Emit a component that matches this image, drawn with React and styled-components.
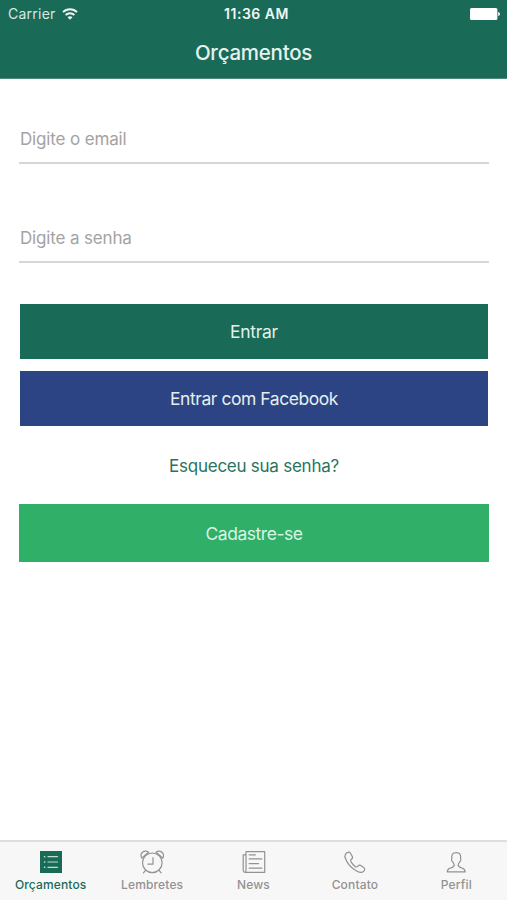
import React from "react";
import styled, { createGlobalStyle } from "styled-components";

const GlobalStyle = createGlobalStyle`
  * {
    box-sizing: border-box;
  }

  body {
    margin: 0;
    background: #fff;
    font-family: Inter, "Liberation Sans", sans-serif;
  }
`;

const Screen = styled.div`
  width: 100%;
  height: 100vh;
  display: flex;
  flex-direction: column;
  overflow: hidden;
`;

const Header = styled.header`
  height: 79px;
  color: #fff;
  background: #196b57;
  border-bottom: 1px solid #4c8b7b;
`;

const StatusBar = styled.div`
  height: 27px;
  padding: 0 7px 0 8px;
  display: grid;
  grid-template-columns: 1fr auto 1fr;
  align-items: center;
`;

const Carrier = styled.div`
  display: flex;
  align-items: center;
  gap: 6px;
  color: #d9e8e4;
  font-size: 14px;
  letter-spacing: 0.25px;
`;

const Clock = styled.div`
  padding-left: 5px;
  color: #f0f7f5;
  font-size: 14px;
  font-weight: 600;
  letter-spacing: 0.5px;
`;

const Battery = styled.svg`
  justify-self: end;
`;

const Title = styled.h1`
  margin: 0;
  height: 51px;
  color: #e6f1ee;
  font-size: 20.5px;
  font-weight: 500;
  line-height: 52px;
  letter-spacing: -0.25px;
  text-align: center;
`;

const Form = styled.form`
  flex: 1;
  padding: 36px 18px 0 19px;
  display: flex;
  flex-direction: column;
`;

const Input = styled.input`
  width: 100%;
  height: 49px;
  margin-bottom: ${(props) => (props.$last ? "41px" : "50px")};
  padding: 1px 0 0 1px;
  border: 0;
  border-bottom: 2px solid #d6d6d6;
  border-radius: 0;
  outline: none;
  background: none;
  color: #333;
  font-family: inherit;
  font-size: 17px;
  letter-spacing: -0.15px;

  &::placeholder {
    color: #a3a3a3;
    opacity: 1;
  }
`;

const Button = styled.button`
  height: 55px;
  margin: 0 1px 12px;
  padding: 0;
  border: 0;
  background: ${(props) => props.$color};
  color: #e4efed;
  font-family: inherit;
  font-size: 17.5px;
  letter-spacing: -0.45px;
`;

const LoginButton = styled(Button)`
  letter-spacing: -0.3px;
`;

const RegisterButton = styled(Button)`
  height: 58px;
  margin: 0;
  color: #d9f4e3;
`;

const ForgotLink = styled.a`
  height: 66px;
  color: #287461;
  font-size: 17px;
  line-height: 57px;
  letter-spacing: -0.25px;
  text-align: center;
`;

const TabBar = styled.nav`
  height: 60px;
  display: flex;
  background: #f7f7f7;
  border-top: 2px solid #dedede;
`;

const Tab = styled.div`
  flex: 1;
  padding-top: 8px;
  display: flex;
  flex-direction: column;
  align-items: center;
  color: ${(props) => (props.$active ? "#196b57" : "#929292")};
`;

const TabIcon = styled.svg`
  width: 24px;
  height: 24px;
  fill: none;
  stroke: currentColor;
  stroke-width: 1.2;
  stroke-linecap: round;
  stroke-linejoin: round;
`;

const TabLabel = styled.span`
  margin-top: 3px;
  font-size: 12px;
  font-weight: 500;
  line-height: 16px;
  letter-spacing: 0.15px;
`;

const WifiIcon = () => (
  <svg width='16' height='12' viewBox='0 0 16 12' fill='none' stroke='#edf6f3' strokeWidth='1.9'>
    <path d='M1 4.2C4.9.2 11.1.2 15 4.2' />
    <path d='M3.6 7C6.1 4.6 9.9 4.6 12.4 7' />
    <path d='M8 11.7 5.5 9.2C6.9 7.9 9.1 7.9 10.5 9.2Z' fill='#edf6f3' stroke='none' />
  </svg>
);

const ListIcon = () => (
  <TabIcon viewBox='0 0 24 24'>
    <path d='M1 1h22v22H1z' fill='currentColor' stroke='none' />
    <path d='M9 6.7h9.5M9 12h9.5M9 17.3h9.5' stroke='#c1dcd3' />
    <path d='M5.5 6.7h.3M5.5 12h.3M5.5 17.3h.3' stroke='#c1dcd3' strokeWidth='1.5' />
  </TabIcon>
);

const AlarmIcon = () => (
  <TabIcon viewBox='0 0 24 24'>
    <circle cx='12.3' cy='12.8' r='9.8' />
    <path d='M13 7.5v6.7H8' />
    <path d='M1.9 8.2C-.4 4.5 2.2.8 6 1.1c1.1.1 1.9.5 2.5 1.3M2.3 7.7l5.6-5' />
    <path d='M22.7 8.2c2.2-3.7-.4-7.4-4.2-7.1-1.1.1-1.9.5-2.5 1.3M22.3 7.7l-5.6-5' />
    <path d='m5.6 20.3-2.2 2.6M19 20.3l2.2 2.6' />
  </TabIcon>
);

const NewsIcon = () => (
  <TabIcon viewBox='0 0 24 24'>
    <path d='M4 1.6h18.7v20.8H3.2a2.2 2.2 0 0 1-2-2.2V4.8H4M4 1.6v18.7c0 1.1-.3 1.8-.9 2.1' />
    <path d='M7.2 4.8h6.2M7.2 8.9h12.6M7.2 13.7h9.4M7.2 18.2h12.6' />
  </TabIcon>
);

const PhoneIcon = () => (
  <TabIcon viewBox='0 0 24 24'>
    <path d='M4.8 2.4c-2.4.9-3.6 3.2-2.4 6.1 2 5.1 6.2 9.9 11.6 12.7 3.2 1.6 6.2 1.7 7.5-.9.7-1.4.4-1.9-.8-2.8l-2.8-2c-1.3-.9-2-.6-3 .7-1 1.1-1.6 1.1-2.8.2-1.8-1.4-3.2-3.1-4.2-4.8-.6-1.1-.5-1.6.5-2.3 1.5-1 1.5-1.8.8-3L7.4 3.2c-.7-1.1-1.4-1.3-2.6-.8z' />
  </TabIcon>
);

const PersonIcon = () => (
  <TabIcon viewBox='0 0 24 24'>
    <path d='M3.2 21.8c.2-2.6 1.1-3.2 3.4-3.8 2.8-.7 3.6-1.2 3.6-2.9 0-1.2-1-1.9-1.5-3.4-.7-.4-1.1-1.1-1.1-2 0-.5.1-.9.3-1.1-.7-4 .9-5.9 4.3-5.9s5 1.9 4.3 5.9c.2.2.3.6.3 1.1 0 .9-.4 1.6-1.1 2-.5 1.5-1.5 2.2-1.5 3.4 0 1.7.8 2.2 3.6 2.9 2.3.6 3.2 1.2 3.4 3.8z' />
  </TabIcon>
);

const tabs = [
  { label: "Orçamentos", Icon: ListIcon, active: true },
  { label: "Lembretes", Icon: AlarmIcon },
  { label: "News", Icon: NewsIcon },
  { label: "Contato", Icon: PhoneIcon },
  { label: "Perfil", Icon: PersonIcon },
];

const App = () => {
  return (
    <Screen>
      <GlobalStyle />
      <Header>
        <StatusBar>
          <Carrier>
            Carrier
            <WifiIcon />
          </Carrier>
          <Clock>11:36 AM</Clock>
          <Battery width='30' height='12' viewBox='0 0 30 12' fill='#fff'>
            <rect x='0' y='0' width='27.4' height='12' rx='1.5' />
            <path d='M28.2 4c2.3.5 2.3 3.5 0 4z' />
          </Battery>
        </StatusBar>
        <Title>Orçamentos</Title>
      </Header>
      <Form>
        <Input type='email' placeholder='Digite o email' />
        <Input type='password' placeholder='Digite a senha' $last />
        <LoginButton type='button' $color='#196b57'>Entrar</LoginButton>
        <Button type='button' $color='#2d4484'>Entrar com Facebook</Button>
        <ForgotLink>Esqueceu sua senha?</ForgotLink>
        <RegisterButton type='button' $color='#30af69'>Cadastre-se</RegisterButton>
      </Form>
      <TabBar>
        {tabs.map(({ label, Icon, active }) => (
          <Tab key={label} $active={active}>
            <Icon />
            <TabLabel>{label}</TabLabel>
          </Tab>
        ))}
      </TabBar>
    </Screen>
  );
};

export default App;
